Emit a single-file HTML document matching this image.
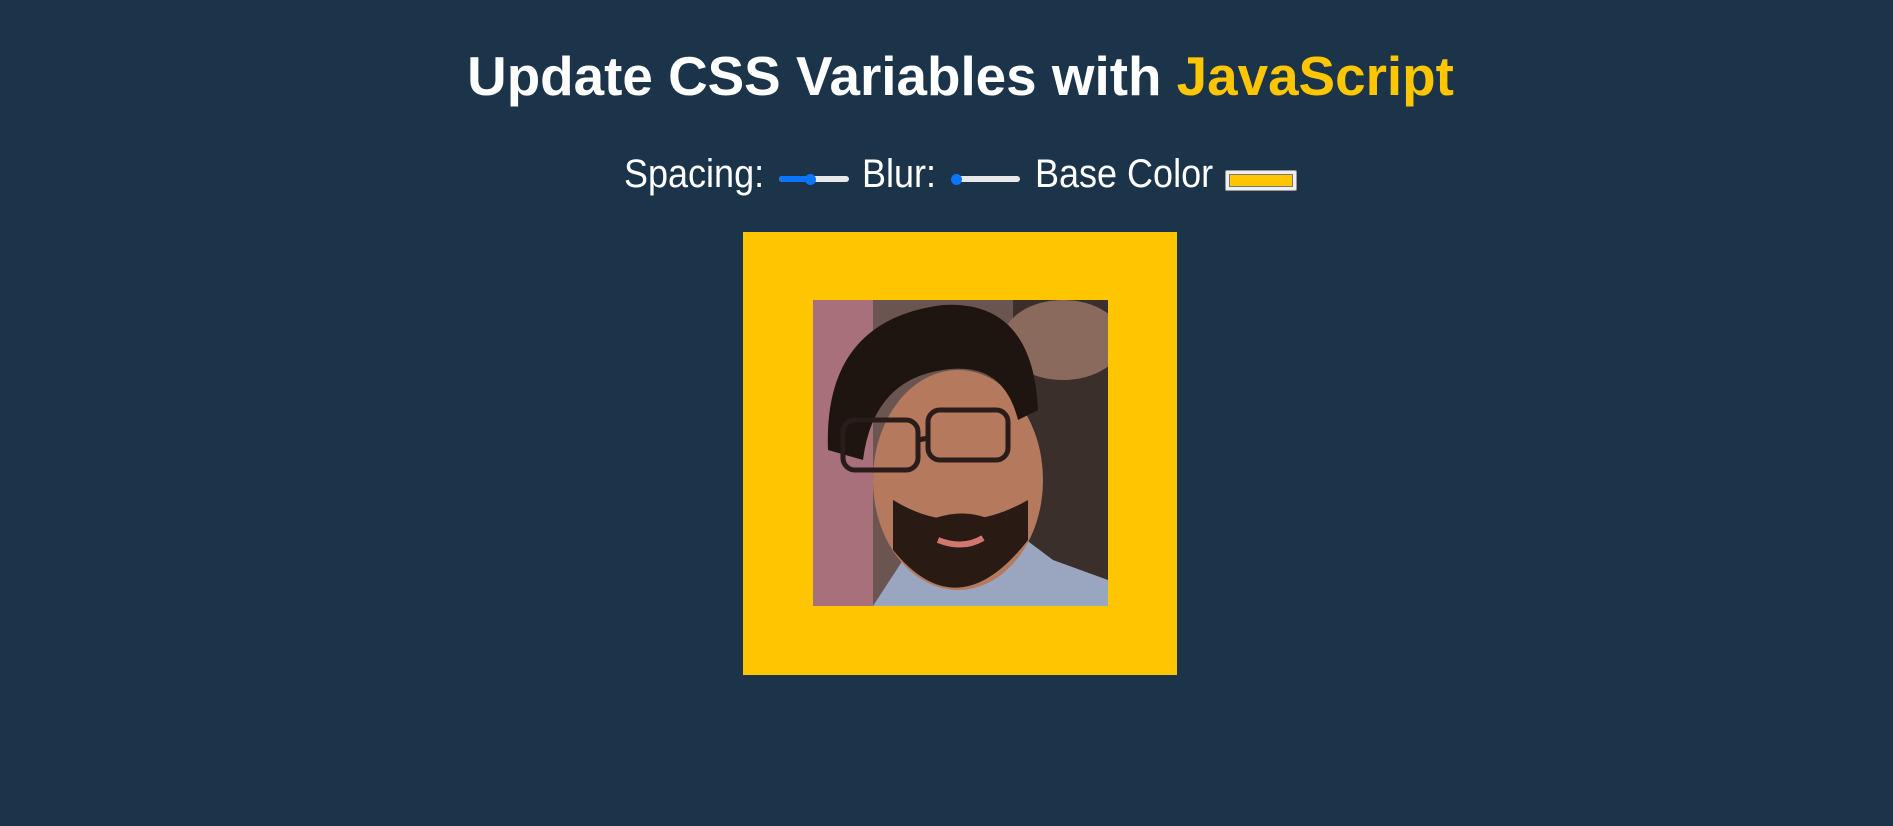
<!DOCTYPE html>
<html><head><style>
body{margin:0;width:1893px;height:826px;background:#1b344a;font-family:"Liberation Sans",sans-serif;color:#fff;overflow:hidden;position:relative}
h1{position:absolute;top:43px;left:14px;width:1893px;text-align:center;margin:0;font-size:54.8px;font-weight:bold;line-height:66px}
h1 span{color:#ffc600}
.t{position:absolute;font-size:40px;line-height:40px;top:154px;transform:scaleX(0.9);transform-origin:0 0;white-space:nowrap}
.sl{position:absolute;height:6px;border-radius:3px;background:#e8e8e8;top:176px}
.fill{position:absolute;height:6px;border-radius:3px;background:#0a75ff;top:176px}
.th{position:absolute;width:11px;height:11px;border-radius:50%;background:#0a75ff;top:173.5px}
</style></head><body>
<h1>Update CSS Variables with <span>JavaScript</span></h1>
<div class="t" style="left:624px">Spacing:</div>
<div class="sl" style="left:779px;width:70px"></div>
<div class="fill" style="left:779px;width:32px"></div>
<div class="th" style="left:805px"></div>
<div class="t" style="left:862px">Blur:</div>
<div class="sl" style="left:952px;width:68px"></div>
<div class="th" style="left:951px"></div>
<div class="t" style="left:1035px">Base Color</div>
<div style="position:absolute;left:1225px;top:170px;width:70px;height:19px;background:#efefef;border:1px solid #999;border-radius:2px"></div>
<div style="position:absolute;left:1229px;top:174px;width:62px;height:11px;background:#ffc600;border:1px solid #777"></div>
<div style="position:absolute;left:743px;top:232px;width:434px;height:443px;background:#ffc600"></div>
<svg style="position:absolute;left:813px;top:300px" width="295" height="306" viewBox="0 0 295 306">
<rect width="295" height="306" fill="#6b5550"/>
<rect x="0" y="0" width="60" height="306" fill="#a8707a"/>
<rect x="200" y="0" width="95" height="306" fill="#3a2f2a"/>
<ellipse cx="250" cy="40" rx="60" ry="40" fill="#8a6a5c"/>
<path d="M60 306 L90 260 L200 230 L240 260 L295 280 L295 306Z" fill="#9aa6c0"/>
<ellipse cx="145" cy="180" rx="85" ry="110" fill="#b57a5e"/>
<path d="M80 250 Q145 330 215 240 L215 200 Q145 240 80 200Z" fill="#2a1a14"/>
<path d="M15 150 Q10 20 130 5 Q220 0 225 110 L205 120 Q190 60 130 70 Q60 80 50 160Z" fill="#1e1410"/>
<rect x="30" y="120" width="75" height="50" rx="12" fill="none" stroke="#2a1c1a" stroke-width="5"/>
<rect x="115" y="110" width="80" height="50" rx="12" fill="none" stroke="#2a1c1a" stroke-width="5"/>
<path d="M105 140 L115 138" stroke="#2a1c1a" stroke-width="5"/>
<path d="M115 225 Q150 210 180 225" stroke="#2a1a14" stroke-width="8" fill="none"/>
<path d="M125 240 Q150 250 170 238" stroke="#d07870" stroke-width="6" fill="none"/>
</svg>
</body></html>
